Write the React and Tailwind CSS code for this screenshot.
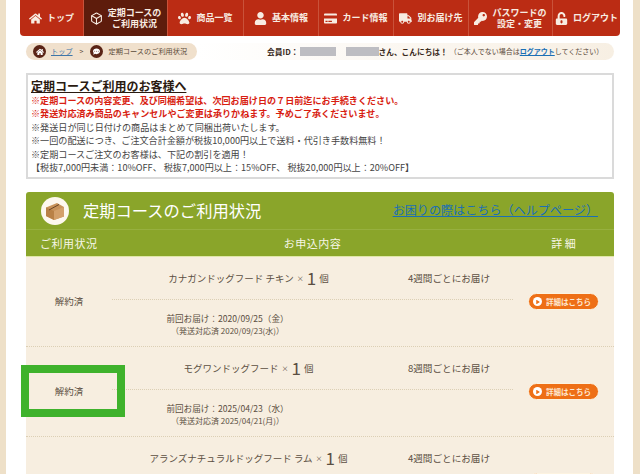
import { FaHome, FaPaw, FaUser, FaCreditCard, FaTruck, FaKey, FaUnlockAlt, FaCommentDots, FaPlay } from 'react-icons/fa'
import { FiBox } from 'react-icons/fi'

const navItems = [
  { label: ['トップ'], icon: FaHome, width: 'w-[64px]' },
  { label: ['定期コースの', 'ご利用状況'], icon: FiBox, width: 'w-[84px]', active: true },
  { label: ['商品一覧'], icon: FaPaw, width: 'w-[76px]' },
  { label: ['基本情報'], icon: FaUser, width: 'w-[75px]' },
  { label: ['カード情報'], icon: FaCreditCard, width: 'w-[75px]' },
  { label: ['別お届け先'], icon: FaTruck, width: 'w-[75px]' },
  { label: ['パスワードの', '設定・変更'], icon: FaKey, width: 'w-[84px]' },
  { label: ['ログアウト'], icon: FaUnlockAlt, width: 'w-[67px]' },
]

const notices = [
  { text: '※定期コースの内容変更、及び同梱希望は、次回お届け日の７日前迄にお手続きください。', red: true },
  { text: '※発送対応済み商品のキャンセルやご変更は承りかねます。予めご了承くださいませ。', red: true },
  { text: '※発送日が同じ日付けの商品はまとめて同梱出荷いたします。' },
  { text: '※一回の配送につき、ご注文合計金額が税抜10,000円以上で送料・代引き手数料無料！' },
  { text: '※定期コースご注文のお客様は、下記の割引を適用！' },
  { text: '【税抜7,000円未満：10%OFF、 税抜7,000円以上：15%OFF、 税抜20,000円以上：20%OFF】' },
]

const rows = [
  { name: 'カナガンドッグフード チキン', cycle: '4週間ごとにお届け', date: '前回お届け：2020/09/25（金）', ship: '（発送対応済 2020/09/23(水)）' },
  { name: 'モグワンドッグフード', cycle: '8週間ごとにお届け', date: '前回お届け：2025/04/23（水）', ship: '（発送対応済 2025/04/21(月)）' },
  { name: 'アランズナチュラルドッグフード ラム', cycle: '4週間ごとにお届け', date: '', ship: '' },
]

function BoxIcon() {
  return (
    <svg viewBox="0 0 28 28" className="h-[28px] w-[28px]">
      <circle cx="14" cy="14" r="14" fill="#fdf8ee" />
      <path d="M5 10.5 16 6l7 4v9.5L13 23l-8-4z" fill="#c8935a" />
      <path d="M5 10.5 13 14v9l-8-4z" fill="#b98146" />
      <path d="M13 14 23 10v9.5L13 23z" fill="#d3a06a" />
      <path d="M8 13 18 7.5" stroke="#6b4423" strokeWidth="1" />
    </svg>
  )
}

function Nav() {
  return (
    <nav className="flex h-[36px] w-[600px] overflow-hidden rounded-b-[4px] bg-[#bb2c14]">
      {navItems.map((item, i) => {
        const Icon = item.icon
        return (
          <div
            key={i}
            className={`flex shrink-0 items-center justify-center gap-[5px] border-r border-[#c9523a] text-[9px] leading-[11.5px] font-bold text-[#f8ece2] last:border-r-0 ${item.width} ${item.active ? 'bg-[#5e1c0c]' : ''}`}
          >
            <Icon className="shrink-0 text-[13px]" />
            <div className="flex flex-col items-center whitespace-nowrap">
              {item.label.map((line) => (
                <span key={line}>{line}</span>
              ))}
            </div>
          </div>
        )
      })}
    </nav>
  )
}

function Breadcrumb() {
  return (
    <div className="mt-[7px] ml-[6px] flex h-[17px] w-[588px] items-center">
      <div className="flex h-full w-[171px] shrink-0 items-center rounded-full bg-[#f0e0cc] pl-[7px] text-[7.2px] text-[#5b4a3a]">
        <span className="flex h-[13px] w-[13px] items-center justify-center rounded-full bg-[#5a2416] text-[8px] text-white">
          <FaHome />
        </span>
        <a className="ml-[5px] text-[7.2px] text-[#3f76a8] underline">トップ</a>
        <span className="ml-[7px] text-[7px]">&gt;</span>
        <span className="ml-[7px] flex h-[13px] w-[13px] items-center justify-center rounded-full bg-[#5a2416] text-[7px] text-white">
          <FaCommentDots />
        </span>
        <span className="ml-[5px] whitespace-nowrap">定期コースのご利用状況</span>
      </div>
      <div className="flex h-full flex-1 items-center rounded-r-full bg-gradient-to-r from-white to-[#f7efe3] pl-[70px] text-[#3a2a1c]">
        <span className="text-[7.8px] font-bold whitespace-nowrap">会員ID：</span>
        <span className="ml-[1px] h-[9px] w-[36px] shrink-0 bg-[#bdbdc2]" />
        <span className="ml-[10px] h-[9px] w-[33px] shrink-0 bg-[#bdbdc2]" />
        <span className="text-[7.7px] font-bold whitespace-nowrap">さん、こんにちは！</span>
        <span className="ml-[2px] text-[7px] whitespace-nowrap text-[#5b4a3a]">
          （ご本人でない場合は<a className="font-bold text-[#1a6fb5] underline">ログアウト</a>してください）
        </span>
      </div>
    </div>
  )
}

function Notice() {
  return (
    <div className="mt-[13px] ml-[6px] h-[106px] w-[588px] border-2 border-[#dadada] pt-[3px] pl-[3px]">
      <div className="mb-[1px] text-[12px] leading-[15px] font-bold whitespace-nowrap text-[#2a1a10] underline">定期コースご利用のお客様へ</div>
      {notices.map((n) => (
        <div
          key={n.text}
          className={`text-[9.1px] leading-[13.4px] whitespace-nowrap ${n.red ? 'font-bold text-[#d81e12]' : 'text-[#444444]'}`}
        >
          {n.text}
        </div>
      ))}
    </div>
  )
}

function Row({ row }) {
  return (
    <div className="grid h-[90px] grid-cols-[86px_401px_101px] border-b border-dotted border-[#dccfb4] text-[#5b4f42]">
      <div className="flex items-center justify-center text-[9.5px]">解約済</div>
      <div className="flex flex-col">
        <div className="grid h-[43px] shrink-0 grid-cols-[273px_128px] items-center border-b border-dotted border-[#dccfb4]">
          <div className="flex items-center justify-center text-[9.5px] whitespace-nowrap">
            {row.name}
            <span className="mx-[3px] text-[7px]">×</span>
            <span className="text-[17px] leading-[20px]">1</span>
            <span className="ml-[3px]">個</span>
          </div>
          <div className="text-center text-[9.6px] whitespace-nowrap">{row.cycle}</div>
        </div>
        <div className="flex w-[231px] flex-1 flex-col items-center justify-center pt-[2px] whitespace-nowrap">
          <div className="text-[8.6px] leading-[13px]">{row.date}</div>
          <div className="text-[8px] leading-[11px]">{row.ship}</div>
        </div>
      </div>
      <div className="flex items-center justify-center">
        <a className="flex h-[17px] w-[71px] items-center gap-[4px] rounded-full border border-[#fdf3e0] bg-[#ee6f16] pl-[4px] text-[7.5px] font-bold whitespace-nowrap text-[#fde7d2]">
          <span className="flex h-[9px] w-[9px] items-center justify-center rounded-full bg-white text-[4px] text-[#ee6f16]">
            <FaPlay />
          </span>
          詳細はこちら
        </a>
      </div>
    </div>
  )
}

function Panel() {
  return (
    <section className="mt-[13px] ml-[6px] w-[588px] overflow-hidden rounded-t-[3px]">
      <div className="flex h-[38px] items-center justify-between border-b border-[#97b03f] bg-[#8aa52a] pr-[16px] pl-[15px]">
        <div className="flex items-center gap-[14px]">
          <BoxIcon />
          <h1 className="text-[16.3px] whitespace-nowrap text-white">定期コースのご利用状況</h1>
        </div>
        <a className="text-[12.1px] whitespace-nowrap text-[#1a6fb5] underline">お困りの際はこちら（ヘルプページ）</a>
      </div>
      <div className="grid h-[27px] grid-cols-[86px_401px_101px] items-center border-b border-[#dfe7a8] bg-[#8aa52a] text-[11px] text-[#f6f6e6]">
        <div className="pl-[14px] tracking-[0.5px] whitespace-nowrap">ご利用状況</div>
        <div className="text-center tracking-[0.5px]">お申込内容</div>
        <div className="text-center">詳 細</div>
      </div>
      <div className="bg-[#f7eee0]">
        {rows.map((row) => (
          <Row key={row.name} row={row} />
        ))}
      </div>
    </section>
  )
}

export default function App() {
  return (
    <div className="relative h-[474px] w-[640px] overflow-hidden bg-[#eee0c8] pr-[7px] pl-[6px] font-['Noto_Sans_CJK_JP','Noto_Sans',sans-serif]">
      <div className="h-full bg-white pl-[14px]">
        <Nav />
        <Breadcrumb />
        <Notice />
        <Panel />
      </div>
      <div className="absolute top-[365px] left-[21px] h-[52px] w-[104px] border-[8px] border-[#3fb22c]" />
    </div>
  )
}
